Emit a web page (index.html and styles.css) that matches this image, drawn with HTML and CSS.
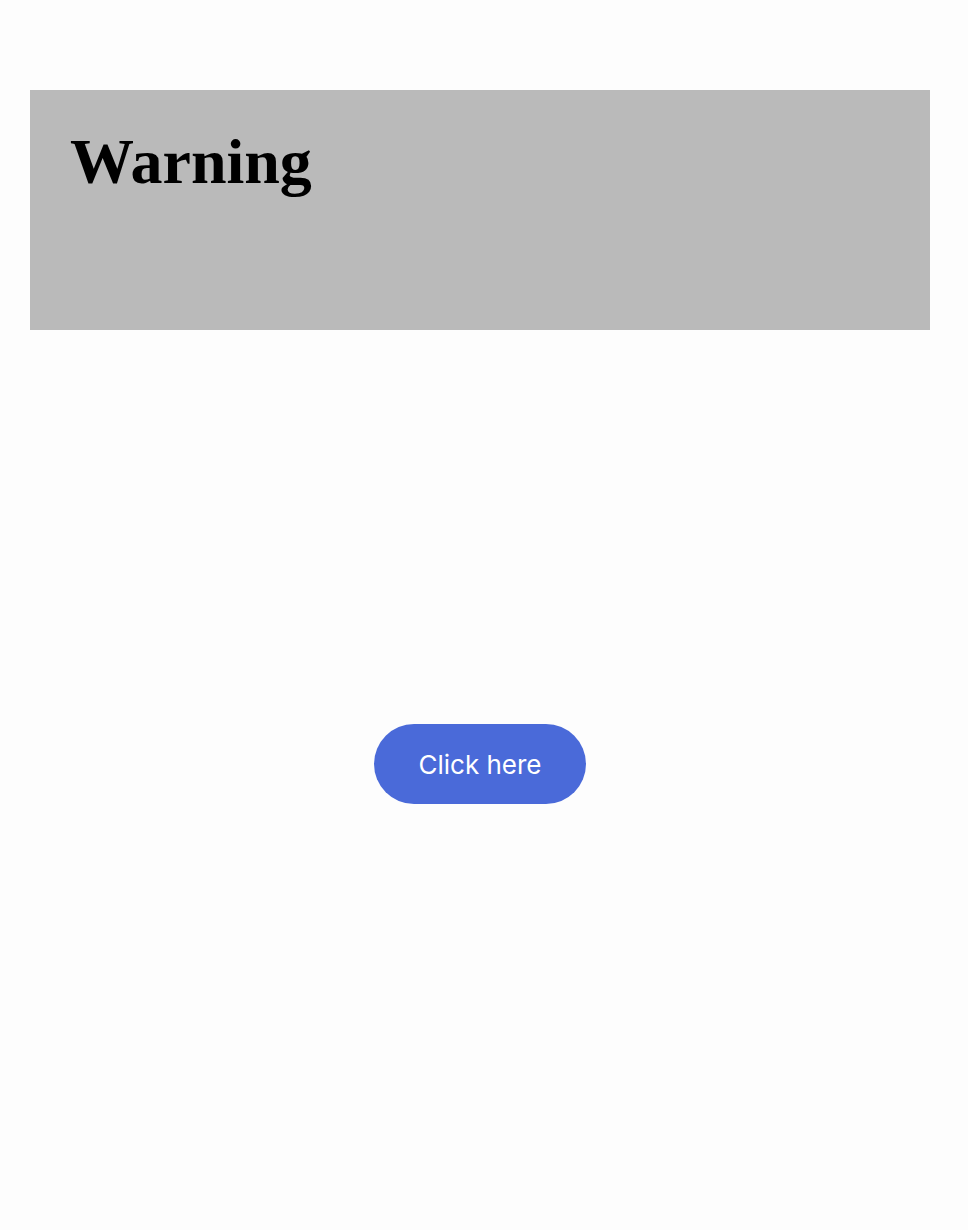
FILE: index.html
```html
<!DOCTYPE html>
<html>
<head>
<meta charset="utf-8">
<link rel="stylesheet" href="styles.css">
</head>
<body>
<div class="page">
  <header class="banner">
    <h1 class="title">Warning</h1>
  </header>
  <div class="actions">
    <button class="btn">Click here</button>
  </div>
</div>
</body>
</html>
```
FILE: styles.css
```css
html, body {
  margin: 0;
  padding: 0;
  background: #fdfdfd;
}
.page {
  width: 900px;
  padding: 90px 0 0 30px;
}
.banner {
  background: #bababa;
  height: 240px;
  box-sizing: border-box;
  padding: 40px 40px;
}
.title {
  margin: 0;
  font-family: "Liberation Serif", "Times New Roman", serif;
  font-weight: bold;
  font-size: 64px;
  line-height: 64px;
  color: #000;
}
.actions {
  display: flex;
  justify-content: center;
  padding-top: 394px;
}
.btn {
  width: 212px;
  height: 80px;
  border: none;
  border-radius: 40px;
  background: #4a6ad9;
  color: #fff;
  font-family: Inter, "Liberation Sans", sans-serif;
  font-size: 26px;
  padding: 0;
}
```
